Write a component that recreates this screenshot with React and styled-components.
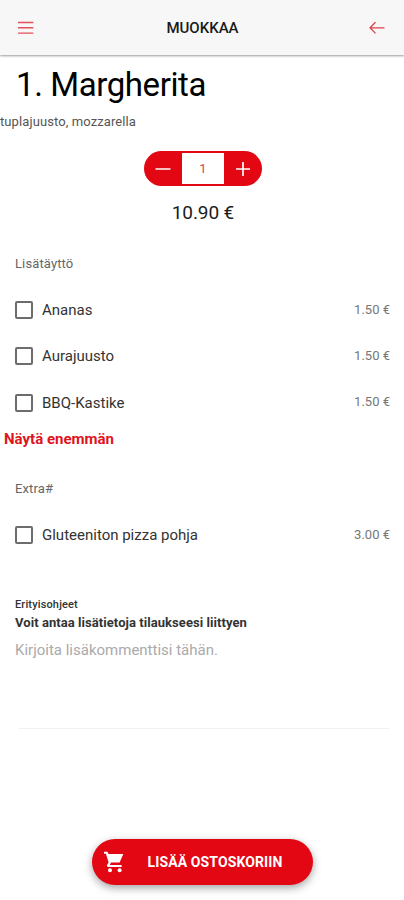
import React from 'react';
import styled, { createGlobalStyle } from 'styled-components';

const extras = [
  { name: 'Ananas', price: '1.50 €' },
  { name: 'Aurajuusto', price: '1.50 €' },
  { name: 'BBQ-Kastike', price: '1.50 €' },
];

function Option({ name, price }) {
  return (
    <OptionRow>
      <Checkbox type="checkbox" aria-label={name} />
      <OptionName>{name}</OptionName>
      <OptionPrice>{price}</OptionPrice>
    </OptionRow>
  );
}

export default function App() {
  return (
    <Page>
      <GlobalStyle />
      <Header>
        <IconButton aria-label="menu">
          <svg width="18" height="16" viewBox="0 0 18 16" fill="none" stroke="#e4515c" strokeWidth="1.4">
            <path d="M1 2.5h15.3M1 7.8h15.3M1 13.1h15.3" />
          </svg>
        </IconButton>
        <HeaderTitle>MUOKKAA</HeaderTitle>
        <IconButton aria-label="back">
          <svg width="18" height="16" viewBox="0 0 18 16" fill="none" stroke="#e0404c" strokeWidth="1.3">
            <path d="M16.5 7.8H2M7.5 2.2L2 7.8l5.5 5.6" />
          </svg>
        </IconButton>
      </Header>

      <Title>1. Margherita</Title>
      <Ingredients>tuplajuusto, mozzarella</Ingredients>

      <Stepper>
        <StepButton aria-label="minus">
          <svg width="18" height="18" viewBox="0 0 18 18" stroke="#fff" strokeWidth="1.6">
            <path d="M1.5 9h15" />
          </svg>
        </StepButton>
        <Count>1</Count>
        <StepButton aria-label="plus">
          <svg width="18" height="18" viewBox="0 0 18 18" stroke="#fff" strokeWidth="1.7">
            <path d="M2 9h14M9 2v14" />
          </svg>
        </StepButton>
      </Stepper>
      <Price>10.90 €</Price>

      <GroupTitle>Lisätäyttö</GroupTitle>
      <OptionList>
        {extras.map((item) => (
          <Option key={item.name} {...item} />
        ))}
      </OptionList>
      <ShowMore>Näytä enemmän</ShowMore>

      <GroupTitle $top={33}>Extra#</GroupTitle>
      <OptionList>
        <Option name="Gluteeniton pizza pohja" price="3.00 €" />
      </OptionList>

      <Notes>
        <NotesLabel>Erityisohjeet</NotesLabel>
        <NotesHint>Voit antaa lisätietoja tilaukseesi liittyen</NotesHint>
        <NotesInput placeholder="Kirjoita lisäkommenttisi tähän." />
        <NotesLine />
      </Notes>

      <Footer>
        <CartButton>
          <svg width="20" height="22" viewBox="0 0 20 22" fill="#fff">
            <path d="M0 .8h3.5l1 2.1H19.3L15.6 11.6H7L5.8 14H17.6v2H4.2c-1 0-1.6-1-1.1-1.9l1.5-2.9L1.9 2.7H0z" />
            <circle cx="6" cy="19.3" r="2" />
            <circle cx="15.6" cy="19.3" r="2" />
          </svg>
          <CartLabel>LISÄÄ OSTOSKORIIN</CartLabel>
        </CartButton>
      </Footer>
    </Page>
  );
}

const GlobalStyle = createGlobalStyle`
  * {
    box-sizing: border-box;
  }
  body {
    margin: 0;
    background: #fff;
    font-family: Roboto, sans-serif;
  }
  button {
    border: 0;
    padding: 0;
    background: none;
    font-family: inherit;
  }
  svg {
    display: block;
  }
`;

const Page = styled.div`
  display: flex;
  flex-direction: column;
  height: 900px;
  overflow: hidden;
  background: #fff;
`;

const Header = styled.header`
  display: flex;
  flex-shrink: 0;
  align-items: center;
  justify-content: space-between;
  height: 55px;
  padding: 0 18px 0 17px;
  background: #f7f7f7;
  box-shadow: 0 1px 2px rgba(0, 0, 0, 0.4);
`;

const IconButton = styled.button`
  width: 18px;
  height: 16px;
`;

const HeaderTitle = styled.div`
  margin-left: 2px;
  font-size: 15px;
  font-weight: 500;
  line-height: 20px;
  color: #1a1a1a;
`;

const Title = styled.h1`
  margin: 11px 0 0 16px;
  font-size: 33px;
  font-weight: 400;
  line-height: 38px;
  letter-spacing: -0.4px;
  color: #000;
`;

const Ingredients = styled.div`
  margin-top: 10px;
  font-size: 13px;
  line-height: 16px;
  letter-spacing: 0.1px;
  color: #555;
`;

const Stepper = styled.div`
  display: flex;
  align-self: center;
  width: 118px;
  height: 35px;
  margin: 21px 0 0 2px;
  border-radius: 18px;
  overflow: hidden;
  background: #e30613;
`;

const StepButton = styled.button`
  display: flex;
  width: 38px;
  align-items: center;
  justify-content: center;
`;

const Count = styled.div`
  flex: 1;
  margin: 2px 0;
  background: #fff;
  font-size: 13px;
  line-height: 31px;
  text-align: center;
  color: #e0404c;
`;

const Price = styled.div`
  margin: 15px 0 0 2px;
  font-size: 19px;
  line-height: 24px;
  letter-spacing: -0.1px;
  text-align: center;
  color: #1c1c1c;
`;

const GroupTitle = styled.h2`
  margin: ${(props) => props.$top || 31}px 0 0 15px;
  font-size: 13px;
  font-weight: 400;
  line-height: 16px;
  letter-spacing: 0.12px;
  color: #666;
`;

const OptionList = styled.div`
  margin-top: 15px;
`;

const OptionRow = styled.label`
  display: flex;
  align-items: center;
  height: 46.3px;
  padding: 0 14px 0 15px;
`;

const Checkbox = styled.input`
  appearance: none;
  width: 18px;
  height: 18px;
  margin: 0;
  border: 2px solid #6c6c6c;
  border-radius: 2px;
`;

const OptionName = styled.span`
  flex: 1;
  margin-left: 9px;
  font-size: 15px;
  color: #333;
`;

const OptionPrice = styled.span`
  padding-bottom: 2px;
  font-size: 13px;
  color: #777;
`;

const ShowMore = styled.button`
  align-self: flex-start;
  margin: 4px 0 0 4px;
  font-size: 15px;
  font-weight: 700;
  line-height: 18px;
  color: #de1420;
`;

const Notes = styled.div`
  display: flex;
  flex-direction: column;
  margin: 40px 15px 0 15px;
`;

const NotesLabel = styled.div`
  font-size: 11px;
  font-weight: 500;
  line-height: 14px;
  letter-spacing: 0.15px;
  color: #333;
`;

const NotesHint = styled.div`
  margin-top: 3px;
  font-size: 13px;
  font-weight: 700;
  line-height: 16px;
  letter-spacing: 0.06px;
  color: #333;
`;

const NotesInput = styled.textarea`
  height: 87px;
  margin: 10px 0 0;
  padding: 0;
  border: 0;
  resize: none;
  outline: none;
  background: none;
  font-family: inherit;
  font-size: 15px;
  line-height: 18px;
  &::placeholder {
    color: #aaa;
  }
`;

const NotesLine = styled.div`
  height: 1px;
  margin-left: 4px;
  background: #f0f0f0;
`;

const Footer = styled.footer`
  display: flex;
  justify-content: center;
  margin-top: auto;
  padding-bottom: 15px;
`;

const CartButton = styled.button`
  display: flex;
  align-items: center;
  width: 221px;
  height: 46px;
  padding-left: 12px;
  border-radius: 23px;
  background: #e30613;
  box-shadow: 0 3px 8px rgba(0, 0, 0, 0.36);
`;

const CartLabel = styled.span`
  margin-left: 24px;
  font-size: 14px;
  font-weight: 700;
  letter-spacing: 0.12px;
  color: #fff;
`;
